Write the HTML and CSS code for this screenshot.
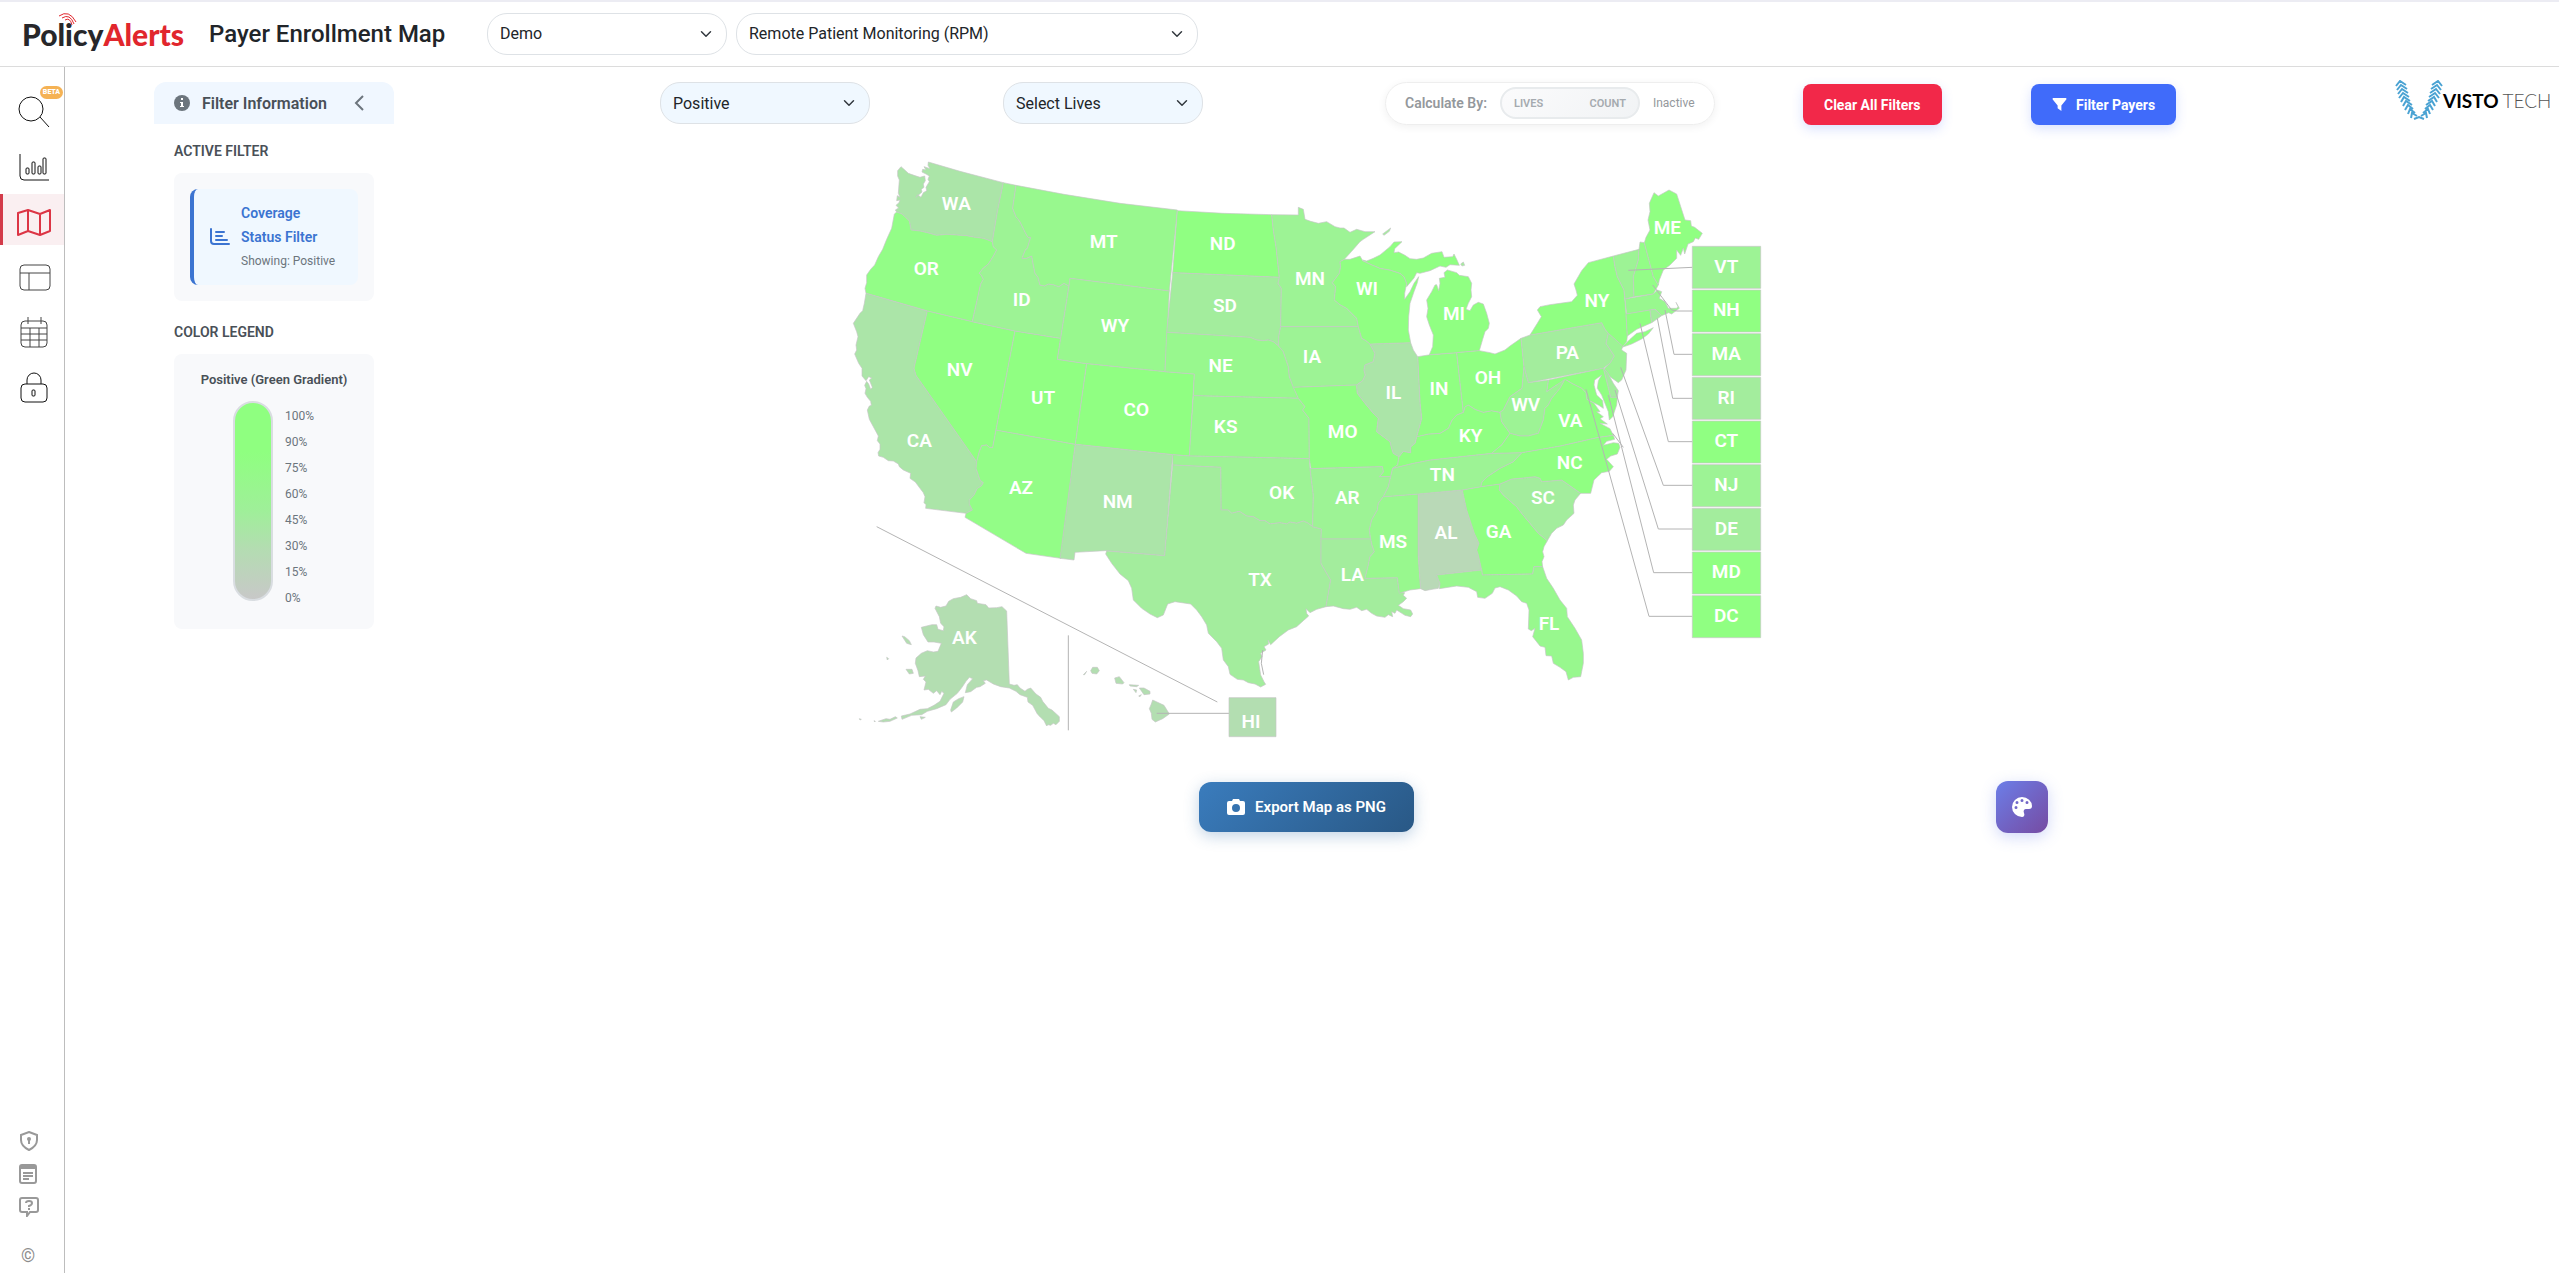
FILE: index.html
```html
<!DOCTYPE html>
<html lang="en">

<head>
    <meta charset="utf-8">
    <title>Payer Enrollment Map</title>
    <link rel="stylesheet" href="styles.css">
</head>

<body>
    <header class="topbar">
        <a class="brand" href="#">
            <svg class="brand-signal" viewBox="0 0 20 14" aria-hidden="true">
                <path d="M1 4Q11 -3 18 10M4 6Q12 1 16 12M7 8Q12 5 14 13" />
            </svg>
            <span>Policy</span><span class="brand-red">Alerts</span>
        </a>
        <h1>Payer Enrollment Map</h1>
        <select class="select select-client" aria-label="Client">
            <option>Demo</option>
        </select>
        <select class="select select-policy" aria-label="Policy">
            <option>Remote Patient Monitoring (RPM)</option>
        </select>
    </header>

    <div class="page">
        <nav class="sidenav">
            <a class="nav-item" href="#" aria-label="Search">
                <svg viewBox="0 0 36 36"><circle cx="15" cy="17" r="12" /><path d="M24 25L33 35" /></svg>
                <span class="beta">BETA</span>
            </a>
            <a class="nav-item" href="#" aria-label="Charts">
                <svg viewBox="0 0 36 36"><path d="M4 7V29Q4 33 8 33H33" /><rect x="10" y="21" width="3" height="6" rx="1" /><rect x="16" y="15" width="3" height="12" rx="1" /><rect x="22" y="19" width="3" height="8" rx="1" /><rect x="27" y="11" width="3" height="16" rx="1" /></svg>
            </a>
            <a class="nav-item active" href="#" aria-label="Map">
                <svg viewBox="0 0 36 36"><path d="M2 11L12 8L24 12L34 8V29L24 33L12 29L2 33ZM12 8V29M24 12V33" /></svg>
            </a>
            <a class="nav-item" href="#" aria-label="Layout">
                <svg viewBox="0 0 36 36" class="grey"><rect x="4" y="8" width="30" height="25" rx="4" /><path d="M4 16H34M13 16V33" /></svg>
            </a>
            <a class="nav-item" href="#" aria-label="Calendar">
                <svg viewBox="0 0 36 36" class="grey"><rect x="5" y="9" width="26" height="26" rx="4" /><path d="M12 5V12M25 5V12M5 16H31M5 22H31M5 28H31M14 16V35M23 16V35" /></svg>
            </a>
            <a class="nav-item" href="#" aria-label="Security">
                <svg viewBox="0 0 36 36"><rect x="5" y="17" width="26" height="18" rx="4" /><path d="M11 17V13A7 7 0 0 1 25 13V17" /><rect x="16" y="23" width="3" height="6" rx="1" /></svg>
            </a>
            <div class="nav-bottom">
                <a href="#" aria-label="Privacy">
                    <svg viewBox="0 0 20 20"><path d="M10 1L18 4V9Q18 15 10 19Q2 15 2 9V4Z" /><circle cx="10" cy="8" r="2" class="solid" /><path d="M10 8V13" /></svg>
                </a>
                <a href="#" aria-label="Terms">
                    <svg viewBox="0 0 20 20"><rect x="1" y="1" width="16" height="18" rx="2" /><path d="M2 3H16" class="thick" /><path d="M4 9H14M4 12H14M4 15H10" /></svg>
                </a>
                <a href="#" aria-label="Help">
                    <svg viewBox="0 0 20 20"><path d="M3 1H17Q19 1 19 3V13Q19 15 17 15H11L8 19V15H3Q1 15 1 13V3Q1 1 3 1Z" /><path d="M7 6Q7 4 10 4Q13 4 13 6Q13 8 10 9V10M10 11V13" /></svg>
                </a>
                <span class="copyright">©</span>
            </div>
        </nav>

        <main>
            <aside class="filter-panel">
                <div class="filter-header">
                    <svg class="info-icon" viewBox="0 0 16 16"><circle cx="8" cy="8" r="8" /><path d="M7 3h2v2H7zM6 7h3v4h1v1H6v-1h1V8H6z" /></svg>
                    <h2>Filter Information</h2>
                    <button class="collapse" aria-label="Collapse">
                        <svg viewBox="0 0 10 16"><path d="M9 1L2 8L9 15" /></svg>
                    </button>
                </div>
                <div class="filter-body">
                    <h3>ACTIVE FILTER</h3>
                    <div class="card">
                        <div class="active-filter">
                            <svg viewBox="0 0 20 18"><path d="M1 1V13Q1 16 4 16H19M6 4H14M6 8H12M6 12H17" /></svg>
                            <div>
                                <strong>Coverage Status Filter</strong>
                                <span>Showing: Positive</span>
                            </div>
                        </div>
                    </div>
                    <h3>COLOR LEGEND</h3>
                    <div class="card legend">
                        <h4>Positive (Green Gradient)</h4>
                        <div class="legend-scale">
                            <div class="legend-bar"></div>
                            <ul>
                                <li>100%</li>
                                <li>90%</li>
                                <li>75%</li>
                                <li>60%</li>
                                <li>45%</li>
                                <li>30%</li>
                                <li>15%</li>
                                <li>0%</li>
                            </ul>
                        </div>
                    </div>
                </div>
            </aside>

            <section class="content">
                <div class="toolbar">
                    <select class="select select-blue select-status" aria-label="Coverage status">
                        <option>Positive</option>
                    </select>
                    <select class="select select-blue select-lives" aria-label="Lives">
                        <option>Select Lives</option>
                    </select>
                    <div class="calculate">
                        <span class="calc-label">Calculate By:</span>
                        <button class="toggle" disabled><span>LIVES</span><span>COUNT</span></button>
                        <span class="calc-state">Inactive</span>
                    </div>
                    <button class="btn btn-red">Clear All Filters</button>
                    <button class="btn btn-blue">
                        <svg viewBox="0 0 16 16"><path d="M1 1H15Q16 2 15 3L10 9V15L6 12V9L1 3Q0 2 1 1Z" /></svg>
                        Filter Payers
                    </button>
                    <a class="visto" href="#">
                        <svg viewBox="0 0 48 42" aria-hidden="true">
                            <g class="visto-mark">
                                <path d="M1 6L5 1L11 5M2 10L6 5L12 9M3 14L7 9L13 13M4 18L8 13L14 17M6 22L9 17L15 21M8 26L11 21L17 25M10 30L13 25L18 29M13 34L15 29L20 33M16 38L17 33L22 36" />
                                <path d="M47 6L43 1L37 5M46 10L42 5L36 9M45 14L41 9L35 13M44 18L40 13L34 17M42 22L39 17L33 21M40 26L37 21L31 25M38 30L35 25L30 29M35 34L33 29L28 33M32 38L31 33L26 36M19 39L24 37L29 39" />
                            </g>
                        </svg>
                        <span class="visto-name">VISTO</span><span class="visto-tech">TECH</span>
                    </a>
                </div>

                <div class="stage">
                    <svg class="map" viewBox="0 0 2766 1770" role="img" aria-label="Enrollment by state">
                        <g class="states">
                            <path class="c40" d="M265 36L360 64L490 98L472 185L457 275L430 265L405 262L380 257L320 253L290 256L262 248L240 243L213 240L208 213L195 200L186 192L170 186L166 180L176 174L168 166L177 158L180 150L170 152L172 137L180 142L175 130L178 90L173 78L173 62L183 50L192 58L205 70L222 76L240 82L254 78L256 92L250 102L252 112L244 118L246 126L228 142L233 134L243 142L250 128L260 122L258 112L268 95L264 88L268 78L258 72L246 66L248 58L258 60L252 50L270 56L264 46Z" />
                            <path class="c85" d="M170 186L186 192L195 200L208 213L213 240L240 243L262 248L290 256L320 253L380 257L405 262L430 265L457 275L460 290L470 300L458 322L445 342L428 356L418 370L424 376L430 388L422 402L397 515L262 483L78 430L75 415L80 398L80 375L92 358L104 345L115 320L128 298L140 268L155 235L163 192Z" />
                            <path class="c40" d="M78 430L262 483L222 655L228 676L410 935L408 955L415 975L420 990L430 998L424 1008L412 1015L402 1035L388 1050L388 1062L397 1080L378 1090L257 1075L258 1064L252 1058L255 1040L250 1028L240 1015L226 996L210 985L212 970L190 960L178 950L175 942L160 933L145 932L130 922L116 918L114 908L120 898L120 882L112 872L115 858L100 830L88 808L82 780L88 768L94 766L92 754L82 742L75 730L78 716L74 706L80 694L86 702L92 718L97 712L88 690L95 684L86 680L78 692L66 678L66 655L56 640L44 612L50 600L48 585L54 560L50 545L40 520L60 490L68 482L73 460Z" />
                            <path class="c90" d="M262 483L397 515L525 543L468 840L458 893L448 892L440 885L425 887L418 905L410 935L228 676L222 655Z" />
                            <path class="c85" d="M468 840L706 883L662 1225L558 1210L375 1102L378 1090L397 1080L388 1062L388 1050L402 1035L412 1015L424 1008L430 998L420 990L415 975L408 955L410 935L418 905L425 887L440 885L448 892L458 893Z" />
                            <path class="c90" d="M525 543L662 565L652 628L740 641L706 883L468 840Z" />
                            <path class="c60" d="M490 98L528 106L518 175L528 200L540 215L556 248L564 262L572 262L562 295L556 300L546 325L560 325L575 318L580 345L585 370L594 382L600 405L614 408L625 402L640 404L656 410L672 400L687 408L662 565L525 543L397 515L422 402L430 388L424 376L418 370L428 356L445 342L458 322L470 300L460 290L457 275L472 185Z" />
                            <path class="c75" d="M528 106L672 133L840 160L1012 180L988 423L690 385L687 408L672 400L656 410L640 404L625 402L614 408L600 405L594 382L585 370L580 345L575 318L560 325L546 325L556 300L562 295L572 262L564 262L556 248L540 215L528 200L518 175Z" />
                            <path class="c75" d="M690 385L988 423L975 665L740 641L652 628L662 565L687 408Z" />
                            <path class="c90" d="M740 641L975 665L1063 672L1048 918L998 914L706 883Z" />
                            <path class="c40" d="M706 883L998 914L974 1217L795 1202L705 1207L702 1230L660 1225Z" />
                            <path class="c90" d="M1012 182L1150 190L1295 194L1300 240L1308 290L1318 382L998 368Z" />
                            <path class="c50" d="M998 368L1318 382L1314 400L1324 415L1322 530L1316 560L1315 587L1300 575L1285 570L1270 572L1250 570L1230 562L980 547Z" />
                            <path class="c75" d="M980 547L1230 562L1250 570L1270 572L1285 570L1300 575L1315 587L1330 605L1335 620L1345 650L1348 680L1360 710L1375 745L1060 737L1063 672L975 665Z" />
                            <path class="c75" d="M1060 737L1375 745L1395 770L1388 780L1407 805L1408 926L1048 918Z" />
                            <path class="c60" d="M998 914L1048 918L1408 926L1410 955L1420 1035L1418 1130L1405 1120L1390 1113L1370 1120L1350 1116L1340 1122L1320 1118L1290 1122L1275 1112L1260 1112L1240 1100L1220 1098L1198 1084L1175 1090L1165 1080L1143 1080L1142 952L998 945Z" />
                            <path class="c50" d="M998 945L1142 952L1143 1080L1165 1080L1175 1090L1198 1084L1220 1098L1240 1100L1260 1112L1275 1112L1290 1122L1320 1118L1340 1122L1350 1116L1370 1120L1390 1113L1405 1120L1418 1130L1444 1137L1443 1240L1460 1270L1472 1290L1465 1330L1458 1370L1430 1378L1410 1388L1398 1376L1400 1390L1406 1398L1390 1412L1370 1430L1345 1440L1318 1460L1292 1484L1284 1470L1286 1482L1272 1490L1278 1500L1262 1510L1266 1520L1256 1535L1262 1575L1272 1595L1277 1603L1262 1611L1245 1602L1225 1598L1210 1590L1192 1588L1170 1573L1165 1550L1150 1530L1145 1495L1130 1475L1105 1450L1100 1425L1085 1400L1070 1380L1052 1362L1005 1355L983 1362L970 1395L952 1403L930 1392L905 1375L880 1350L875 1315L865 1292L840 1272L815 1240L797 1212L800 1203L974 1217Z" />
                            <path class="c60" d="M1295 194L1375 195L1375 172L1390 178L1395 208L1412 214L1435 220L1460 215L1485 230L1500 234L1512 234L1530 247L1550 238L1575 245L1605 245L1570 268L1560 275L1535 304L1513 328L1500 335L1502 350L1498 370L1477 398L1487 410L1485 430L1483 450L1500 464L1520 475L1535 490L1550 505L1555 530L1322 530L1324 415L1314 400L1318 382L1308 290L1300 240Z" />
                            <path class="c60" d="M1322 530L1555 530L1565 565L1578 572L1590 582L1605 610L1600 635L1575 645L1572 660L1576 675L1568 692L1550 705L1360 712L1348 680L1345 650L1335 620L1330 605L1315 587L1316 560Z" />
                            <path class="c90" d="M1360 712L1550 705L1552 730L1575 760L1600 790L1615 805L1610 845L1630 860L1650 875L1655 895L1660 910L1677 920L1673 945L1658 955L1652 980L1618 980L1630 966L1627 950L1413 956L1408 926L1407 805L1388 780L1395 770L1375 745Z" />
                            <path class="c60" d="M1413 956L1627 950L1630 966L1618 980L1652 980L1645 1010L1630 1040L1615 1060L1612 1080L1595 1110L1588 1140L1592 1167L1443 1167L1444 1137L1418 1130L1420 1035L1410 955Z" />
                            <path class="c50" d="M1443 1167L1592 1167L1596 1185L1603 1205L1590 1220L1585 1245L1575 1285L1672 1283L1678 1325L1694 1328L1690 1336L1700 1345L1690 1355L1675 1366L1690 1376L1712 1380L1718 1392L1712 1400L1695 1396L1670 1380L1665 1390L1655 1385L1658 1400L1645 1394L1635 1402L1610 1398L1595 1390L1580 1378L1565 1382L1550 1372L1530 1378L1510 1376L1480 1368L1458 1370L1465 1330L1472 1290L1460 1270L1443 1240Z" />
                            <path class="c75" d="M1630 1040L1735 1032L1735 1220L1742 1316L1710 1320L1678 1330L1672 1283L1575 1285L1585 1245L1590 1220L1603 1205L1596 1185L1592 1167L1588 1140L1595 1110L1612 1080L1615 1060Z" />
                            <path class="c20" d="M1735 1032L1867 1020L1880 1080L1903 1150L1917 1180L1910 1200L1915 1215L1925 1260L1790 1275L1800 1300L1795 1315L1776 1318L1755 1322L1742 1316L1735 1220Z" />
                            <path class="c90" d="M1867 1020L1922 1010L1980 1002L1978 1020L1990 1035L2030 1070L2045 1090L2070 1120L2095 1150L2122 1172L2112 1190L2108 1205L2112 1220L2106 1235L2108 1250L2082 1250L2078 1272L1927 1275L1925 1260L1915 1215L1910 1200L1917 1180L1903 1150L1880 1080Z" />
                            <path class="c75" d="M1790 1275L1925 1260L1927 1275L2078 1272L2082 1250L2108 1250L2120 1285L2140 1315L2160 1350L2180 1375L2182 1400L2205 1435L2225 1470L2230 1510L2230 1540L2222 1580L2200 1582L2185 1590L2178 1565L2160 1552L2140 1540L2135 1518L2118 1517L2115 1492L2100 1488L2078 1460L2085 1435L2074 1442L2065 1437L2067 1380L2060 1360L2045 1355L2030 1338L2005 1320L1980 1310L1965 1314L1957 1330L1935 1345L1913 1342L1910 1325L1885 1312L1850 1308L1798 1316L1800 1300Z" />
                            <path class="c50" d="M1980 1002L2015 987L2050 984L2085 980L2100 985L2105 995L2165 990L2222 1030L2205 1050L2200 1065L2202 1090L2180 1110L2170 1125L2150 1135L2135 1150L2122 1172L2095 1150L2070 1120L2045 1090L2030 1070L1990 1035L1978 1020Z" />
                            <path class="c90" d="M2045 908L2160 888L2275 862L2320 856L2324 868L2300 874L2290 886L2320 878L2336 880L2340 892L2332 912L2312 918L2300 928L2320 950L2308 964L2285 968L2262 990L2252 1030L2222 1030L2165 990L2105 995L2100 985L2085 980L2050 984L2015 987L1980 1002L1922 1010L1926 995L1945 978L1980 955L2020 935Z" />
                            <path class="c60" d="M1658 955L1720 940L1770 930L1955 910L2045 908L2020 935L1980 955L1945 978L1926 995L1922 1010L1867 1020L1735 1032L1630 1040L1645 1010L1652 980Z" />
                            <path class="c90" d="M1658 955L1673 945L1677 920L1690 904L1712 908L1712 890L1725 880L1730 860L1765 852L1800 850L1825 835L1835 812L1850 795L1870 787L1875 770L1885 765L1905 778L1930 787L1955 782L1980 787L1985 815L2010 850L1985 885L1955 910L1770 930L1720 940Z" />
                            <path class="c90" d="M1733 620L1765 615L1850 608L1870 787L1850 795L1835 812L1825 835L1800 850L1765 852L1730 860L1745 805L1740 760Z" />
                            <path class="c40" d="M1590 582L1712 578L1720 600L1733 620L1740 760L1745 805L1730 860L1725 880L1712 890L1712 908L1690 904L1677 920L1660 910L1655 895L1650 875L1630 860L1610 845L1615 805L1600 790L1575 760L1552 730L1550 705L1568 692L1576 675L1572 660L1575 645L1600 635L1605 610Z" />
                            <path class="c90" d="M1513 328L1530 328L1560 318L1568 332L1585 340L1620 355L1650 360L1680 370L1692 380L1700 400L1694 430L1694 448L1710 425L1722 400L1736 380L1732 398L1722 425L1710 460L1706 500L1705 540L1712 578L1590 582L1578 572L1565 565L1555 530L1550 505L1535 490L1520 475L1500 464L1483 450L1485 430L1487 410L1477 398L1498 370L1502 350L1500 335Z" />
                            <path class="c90" d="M1568 330L1580 333L1600 325L1620 315L1650 290L1662 276L1686 275L1664 296L1662 308L1676 306L1695 316L1710 326L1730 328L1750 324L1775 310L1806 305L1812 322L1838 320L1842 312L1850 328L1858 346L1830 344L1818 352L1800 348L1770 362L1740 370L1730 368L1722 384L1700 410L1700 400L1692 380L1680 370L1650 360L1620 355L1585 340Z" />
                            <path class="c90" d="M1768 614L1778 590L1780 555L1768 525L1760 500L1764 475L1760 450L1775 425L1785 405L1790 404L1796 422L1800 400L1798 385L1815 382L1812 368L1822 360L1850 368L1858 376L1885 380L1895 400L1893 420L1895 440L1885 460L1878 478L1890 482L1900 465L1915 457L1930 462L1940 490L1948 520L1945 535L1935 545L1928 568L1918 602L1850 608Z" />
                            <path class="c50" d="M1628 252L1652 234L1648 244L1632 256ZM1862 342L1870 336L1874 346L1866 348Z" />
                            <path class="c90" d="M1850 608L1918 602L1950 608L1965 612L1995 600L2010 588L2043 565L2052 650L2046 715L2010 740L1990 780L1980 787L1955 782L1930 787L1905 778L1885 765L1875 770L1870 787Z" />
                            <path class="c50" d="M2043 565L2070 555L2285 518L2295 538L2305 550L2298 580L2323 618L2310 640L2290 655L2065 698L2052 650Z" />
                            <path class="c90" d="M2070 555L2092 520L2104 500L2092 480L2100 470L2130 464L2160 460L2195 455L2212 436L2208 420L2202 402L2225 362L2245 338L2320 318L2325 350L2332 380L2352 420L2358 492L2362 558L2360 575L2348 590L2305 550L2295 538L2285 518Z" />
                            <path class="c90" d="M2346 592L2370 568L2390 550L2415 545L2440 533L2425 552L2405 567L2375 582Z" />
                            <path class="c60" d="M2305 550L2348 588L2345 600L2360 610L2358 660L2345 690L2335 698L2310 680L2292 656L2310 640L2323 618L2298 580Z" />
                            <path class="c60" d="M2320 318L2397 298L2395 330L2380 380L2382 440L2355 447L2352 420L2332 380L2325 350Z" />
                            <path class="c85" d="M2397 298L2400 276L2413 278L2440 380L2455 405L2440 432L2382 440L2380 380L2395 330Z" />
                            <path class="c90" d="M2413 278L2418 262L2430 240L2424 210L2430 185L2428 160L2442 128L2455 138L2487 120L2510 132L2535 210L2552 212L2554 228L2564 232L2587 250L2576 268L2566 264L2560 275L2544 282L2534 312L2530 294L2522 316L2510 300L2510 325L2490 345L2470 360L2458 390L2455 405L2440 380Z" />
                            <path class="c75" d="M2355 447L2440 432L2452 420L2465 425L2458 445L2475 455L2485 475L2510 475L2514 470L2508 457L2518 475L2495 492L2486 488L2465 497L2445 478L2360 492Z" />
                            <path class="c90" d="M2358 492L2430 480L2435 518L2390 538L2362 558Z" />
                            <path class="c50" d="M2430 480L2445 478L2465 497L2450 508L2435 518Z" />
                            <path class="c50" d="M2290 655L2303 668L2320 700L2335 722L2332 742L2312 742Z" />
                            <path class="c90" d="M2120 725L2125 690L2290 655L2312 742L2332 742L2330 765L2318 800L2308 810L2305 785L2285 735L2272 715L2275 692L2285 675L2264 690L2262 705L2270 735L2288 752L2290 775L2275 765L2240 748L2238 728L2225 715L2195 700L2180 690L2150 705Z" />
                            <path class="c60" d="M2052 650L2065 698L2125 690L2120 725L2150 705L2175 688L2160 715L2135 745L2125 765L2115 775L2110 810L2095 850L2065 858L2040 858L2010 850L1985 815L1980 787L1990 780L2010 740L2046 715Z" />
                            <path class="c90" d="M2175 688L2195 700L2225 715L2238 728L2240 748L2262 760L2280 785L2270 785L2290 800L2280 806L2302 822L2280 820L2310 836L2320 856L2275 862L2160 888L2045 908L1955 910L1985 885L2010 850L2040 858L2065 858L2095 850L2110 810L2115 775L2125 765L2135 745L2160 715Z" />
                            <path class="c30" d="M285 1375L288 1368L302 1372L318 1368L326 1354L340 1346L362 1342L380 1334L392 1346L410 1352L412 1360L438 1364L446 1374L470 1373L486 1370L500 1383L508 1602L522 1606L532 1604L540 1614L555 1624L562 1618L572 1614L588 1632L602 1642L608 1654L625 1675L636 1680L658 1700L658 1714L648 1724L640 1720L632 1726L624 1724L620 1728L612 1712L600 1700L592 1692L578 1666L564 1656L562 1642L540 1634L528 1624L508 1614L482 1610L460 1602L440 1590L430 1592L436 1600L420 1610L410 1612L392 1625L376 1628L382 1604L398 1586L388 1582L378 1594L366 1612L352 1630L330 1648L318 1664L290 1676L262 1684L245 1694L215 1696L186 1708L184 1698L210 1692L240 1678L262 1676L282 1666L300 1654L312 1630L305 1624L300 1634L290 1622L280 1630L265 1618L252 1620L258 1596L250 1588L256 1578L238 1580L234 1562L226 1540L228 1524L244 1510L262 1502L280 1506L294 1504L304 1480L282 1476L264 1476L250 1454L244 1432L276 1424L290 1424L294 1438L310 1442L312 1430L302 1420L298 1400Z" />
                            <path class="c30" d="M332 1680L340 1656L356 1646L372 1640L368 1656L350 1674L334 1686ZM186 1458L194 1460L208 1472L214 1484L200 1480ZM198 1558L216 1558L220 1570L208 1572ZM140 1522L146 1526L142 1530ZM115 1714L138 1706L150 1708L166 1700L172 1704L150 1714L130 1716ZM58 1706L64 1708L60 1710ZM102 1712L106 1714L104 1716ZM240 1700L256 1702L244 1708Z" />
                            <path class="c30" d="M752 1562L758 1552L772 1552L778 1562L770 1572L756 1570ZM730 1574L740 1564L734 1574ZM824 1584L838 1580L852 1598L848 1602L828 1600ZM868 1604L896 1606L890 1610L870 1608ZM880 1618L890 1620L888 1628ZM898 1614L912 1614L930 1624L930 1632L912 1634ZM896 1638L904 1634L900 1640ZM934 1662L938 1650L972 1666L988 1692L968 1706L946 1716L936 1708L934 1690L928 1676Z" />
                        </g>

                        <g class="leaders">
                            <path d="M110 1130L1132 1656M685 1456V1741M950 1690H1167" />
                            <path d="M2365 361L2557 352M2438 405L2495 480L2510 483H2557M2475 480L2502 613H2557M2452 505L2498 745H2557M2400 520L2485 875H2557M2342 652L2470 1006H2557M2325 720L2455 1137H2557M2305 735L2441 1268H2557M2238 718L2427 1399H2557" />
                            <path d="M2318 850L2350 892M1268 1500L1264 1540L1271 1574" />
                        </g>

                        <g class="states">
                            <rect class="c60" x="2557" y="289" width="205" height="126" />
                            <rect class="c90" x="2557" y="420" width="205" height="126" />
                            <rect class="c75" x="2557" y="551" width="205" height="126" />
                            <rect class="c50" x="2557" y="682" width="205" height="126" />
                            <rect class="c90" x="2557" y="813" width="205" height="126" />
                            <rect class="c60" x="2557" y="944" width="205" height="126" />
                            <rect class="c50" x="2557" y="1075" width="205" height="126" />
                            <rect class="c90" x="2557" y="1206" width="205" height="126" />
                            <rect class="c90" x="2557" y="1337" width="205" height="126" />
                            <rect class="c30" x="1167" y="1643" width="141" height="117" />
                        </g>

                        <g class="labels">
                            <text x="349" y="180">WA</text>
                            <text x="259" y="375">OR</text>
                            <text x="238" y="891">CA</text>
                            <text x="359" y="677">NV</text>
                            <text x="545" y="467">ID</text>
                            <text x="791" y="293">MT</text>
                            <text x="825" y="545">WY</text>
                            <text x="609" y="762">UT</text>
                            <text x="889" y="797">CO</text>
                            <text x="543" y="1032">AZ</text>
                            <text x="833" y="1073">NM</text>
                            <text x="1148" y="299">ND</text>
                            <text x="1155" y="485">SD</text>
                            <text x="1142" y="666">NE</text>
                            <text x="1157" y="848">KS</text>
                            <text x="1325" y="1046">OK</text>
                            <text x="1260" y="1309">TX</text>
                            <text x="1410" y="404">MN</text>
                            <text x="1416" y="639">IA</text>
                            <text x="1508" y="863">MO</text>
                            <text x="1522" y="1062">AR</text>
                            <text x="1537" y="1292">LA</text>
                            <text x="1581" y="435">WI</text>
                            <text x="1842" y="509">MI</text>
                            <text x="1660" y="746">IL</text>
                            <text x="1797" y="734">IN</text>
                            <text x="1944" y="703">OH</text>
                            <text x="1892" y="875">KY</text>
                            <text x="1807" y="992">TN</text>
                            <text x="1659" y="1193">MS</text>
                            <text x="1818" y="1166">AL</text>
                            <text x="1976" y="1163">GA</text>
                            <text x="2127" y="1440">FL</text>
                            <text x="2109" y="1061">SC</text>
                            <text x="2189" y="956">NC</text>
                            <text x="2191" y="831">VA</text>
                            <text x="2057" y="782">WV</text>
                            <text x="2182" y="626">PA</text>
                            <text x="2271" y="470">NY</text>
                            <text x="2482" y="251">ME</text>
                            <text x="373" y="1481">AK</text>
                            <text x="1233" y="1733">HI</text>
                            <text x="2659" y="368">VT</text>
                            <text x="2659" y="499">NH</text>
                            <text x="2659" y="630">MA</text>
                            <text x="2659" y="761">RI</text>
                            <text x="2659" y="892">CT</text>
                            <text x="2659" y="1023">NJ</text>
                            <text x="2659" y="1154">DE</text>
                            <text x="2659" y="1285">MD</text>
                            <text x="2659" y="1416">DC</text>
                        </g>
                    </svg>

                    <div class="actions">
                        <button class="export">
                            <svg viewBox="0 0 18 16"><path fill-rule="evenodd" d="M6 0H12L13 2H16Q18 2 18 4V14Q18 16 16 16H2Q0 16 0 14V4Q0 2 2 2H5ZM9 5A4 4 0 1 0 9 13A4 4 0 1 0 9 5Z" /></svg>
                            Export Map as PNG
                        </button>
                        <button class="palette" aria-label="Color theme">
                            <svg viewBox="0 0 20 20"><path fill-rule="evenodd" d="M10 0A10 10 0 0 0 0 10A10 10 0 0 0 10 20C12 20 13 18 12 16C11 14 12 12 14 12H17C19 12 20 11 20 9A10 9 0 0 0 10 0ZM4 9A1 1 0 0 1 4 12A1 1 0 0 1 4 9ZM5 4A1 1 0 0 1 5 7A1 1 0 0 1 5 4ZM10 2A1 1 0 0 1 10 5A1 1 0 0 1 10 2ZM15 4A1 1 0 0 1 15 7A1 1 0 0 1 15 4Z" /></svg>
                        </button>
                    </div>
                </div>
            </section>
        </main>
    </div>
</body>

</html>
```

FILE: styles.css
```css
* {
    box-sizing: border-box;
}

body {
    font-family: Roboto, "Liberation Sans", sans-serif;
    font-size: 16px;
    color: #212529;
    background-color: #fff;
    margin: 0;
    min-height: 100vh;
    display: flex;
    flex-direction: column;
}

h1, h2, h3, h4, ul {
    margin: 0;
    padding: 0;
}

button {
    font-family: inherit;
    border: none;
    cursor: pointer;
}

a {
    color: inherit;
    text-decoration: none;
}

/* Top bar */
.topbar {
    display: flex;
    align-items: center;
    height: 67px;
    padding: 1px 0 0 22px;
    border-bottom: 1px solid #dcdcdc;
    box-shadow: inset 0 2px 0 #ececf3;
}

.brand {
    position: relative;
    display: flex;
    width: 187px;
    font-family: Lato, sans-serif;
    font-size: 30px;
    font-weight: 900;
    line-height: 36px;
    color: #27272a;
}

.brand-red {
    color: #e1262d;
}

.brand-signal {
    position: absolute;
    left: 36px;
    top: -4px;
    width: 20px;
    height: 14px;
    fill: none;
    stroke: #e1262d;
    stroke-width: 1;
}

.topbar h1 {
    width: 278px;
    font-size: 24px;
    font-weight: 500;
}

.select {
    appearance: none;
    height: 42px;
    padding: 0 40px 0 12px;
    border: 1px solid #dee2e6;
    border-radius: 20px;
    font-family: inherit;
    font-size: 16px;
    color: #212529;
    background: #fff url("data:image/svg+xml,%3Csvg xmlns='http://www.w3.org/2000/svg' viewBox='0 0 16 16'%3E%3Cpath fill='none' stroke='%23343a40' stroke-width='2' stroke-linecap='round' stroke-linejoin='round' d='m2 5 6 6 6-6'/%3E%3C/svg%3E") no-repeat right 14px center / 12px 12px;
}

.select-client {
    width: 240px;
    margin-right: 9px;
}

.select-policy {
    width: 462px;
}

.select-blue {
    background-color: #f0f8ff;
}

.select-status {
    width: 210px;
}

.select-lives {
    width: 200px;
}

.page {
    display: flex;
    flex: 1;
}

/* Left navigation */
.sidenav {
    display: flex;
    flex-direction: column;
    gap: 4px;
    width: 65px;
    padding: 17px 0 7px;
    border-right: 1px solid #bdbdbd;
}

.nav-item {
    position: relative;
    display: flex;
    align-items: center;
    height: 51px;
    padding-left: 13px;
    border-left: 3px solid transparent;
}

.nav-item svg {
    width: 36px;
    height: 36px;
    fill: none;
    stroke: #111;
    stroke-width: 1;
}

.nav-item svg.grey {
    stroke: #444;
}

.nav-item.active {
    background-color: #faeff1;
    border-left-color: #d33b4a;
}

.nav-item.active svg {
    stroke: #dc3545;
    stroke-width: 2;
    stroke-linejoin: round;
}

.beta {
    position: absolute;
    top: 2px;
    right: 1px;
    width: 23px;
    border-radius: 7px;
    background-color: #f5b254;
    color: #fff;
    font-size: 7px;
    font-weight: 900;
    line-height: 13px;
    text-align: center;
}

.nav-bottom {
    display: flex;
    flex-direction: column;
    gap: 13px;
    margin-top: auto;
    padding-left: 19px;
    color: #8c8c8c;
}

.nav-bottom a {
    height: 20px;
}

.nav-bottom svg {
    width: 20px;
    height: 20px;
    fill: none;
    stroke: #999;
    stroke-width: 2;
}

.nav-bottom .thick {
    stroke-width: 4;
}

.nav-bottom .solid {
    fill: #999;
    stroke: none;
}

.copyright {
    margin-top: 16px;
    padding-left: 2px;
    font-size: 18px;
    line-height: 20px;
}

main {
    display: flex;
    flex: 1;
    padding-left: 89px;
}

/* Filter information */
.filter-panel {
    width: 240px;
    padding-top: 15px;
    color: #495057;
}

.filter-header {
    display: flex;
    align-items: center;
    height: 42px;
    padding: 0 30px 0 20px;
    border-radius: 12px 12px 0 0;
    background-color: #f0f7ff;
}

.filter-header h2 {
    flex: 1;
    margin-left: 12px;
    font-size: 16px;
    font-weight: 600;
}

.info-icon {
    width: 16px;
    height: 16px;
    fill: #6c757d;
}

.info-icon path {
    fill: #fff;
}

.collapse {
    padding: 0;
    background: none;
}

.collapse svg {
    display: block;
    width: 10px;
    height: 16px;
    fill: none;
    stroke: #6c757d;
    stroke-width: 2;
}

.filter-body {
    padding: 16px 20px;
}

.filter-body h3 {
    font-size: 14px;
    font-weight: 600;
    line-height: 22px;
}

.card {
    margin: 11px 0 20px;
    padding: 16px;
    border-radius: 8px;
    background-color: #f8f9fb;
}

.active-filter {
    display: flex;
    align-items: center;
    gap: 11px;
    padding: 12px 16px;
    border-left: 4px solid #3b74d1;
    border-radius: 8px;
    background-color: #f0f8ff;
}

.active-filter svg {
    flex: none;
    width: 20px;
    height: 18px;
    fill: none;
    stroke: #3b74d1;
    stroke-width: 2;
    stroke-linecap: round;
}

.active-filter strong {
    display: block;
    font-size: 14px;
    font-weight: 600;
    line-height: 24px;
    color: #3b74d1;
}

.active-filter span {
    font-size: 12px;
    line-height: 24px;
    white-space: nowrap;
    color: #6c757d;
}

.legend {
    padding-bottom: 18px;
}

.legend h4 {
    font-size: 13px;
    font-weight: 600;
    line-height: 20px;
    text-align: center;
}

.legend-scale {
    display: flex;
    gap: 12px;
    margin-top: 11px;
    padding-left: 43px;
}

.legend-bar {
    width: 40px;
    height: 200px;
    border: 2px solid #d9dde1;
    border-radius: 20px;
    background: linear-gradient(#8fff80 0%, #8fff80 25%, #9fef99 55%, #b4dcb2 75%, #c8c8c8 100%);
}

.legend ul {
    padding-top: 2px;
    list-style: none;
    font-size: 12px;
    line-height: 26px;
    color: #6c757d;
}

/* Toolbar */
.content {
    flex: 1;
    padding-top: 10px;
}

.toolbar {
    display: grid;
    grid-template-columns: 343fr 382fr 418fr 228fr 364fr 155px;
    justify-items: start;
    align-items: center;
    height: 52px;
    padding: 0 9px 0 266px;
}

.calculate {
    display: flex;
    align-items: center;
    gap: 13px;
    height: 43px;
    padding: 0 19px;
    border: 1px solid #eee;
    border-radius: 22px;
    box-shadow: 0 2px 8px rgba(0, 0, 0, 0.06);
    white-space: nowrap;
    color: #94989c;
}

.calc-label {
    font-size: 14px;
    font-weight: 600;
}

.calc-state {
    font-size: 12px;
}

.toggle {
    display: flex;
    justify-content: space-between;
    align-items: center;
    width: 140px;
    height: 32px;
    padding: 0 12px;
    border: 2px solid #e8ebed;
    border-radius: 16px;
    background: linear-gradient(135deg, #fbfbfc, #f1f3f5);
    font-size: 11px;
    font-weight: 600;
    color: #a5aaaf;
}

.btn {
    display: flex;
    align-items: center;
    gap: 9px;
    height: 41px;
    margin-top: 3px;
    padding: 0 21px;
    border-radius: 8px;
    box-shadow: 0 4px 12px rgba(65, 105, 250, 0.2);
    color: #fff;
    font-size: 14px;
    font-weight: 700;
    white-space: nowrap;
}

.btn svg {
    width: 15px;
    height: 15px;
    fill: #fff;
}

.btn-red {
    background-color: #f22849;
}

.btn-blue {
    background-color: #406bfa;
}

.visto {
    display: flex;
    align-self: start;
    align-items: center;
    font-family: Lato, sans-serif;
    font-size: 19px;
    line-height: 48px;
}

.visto svg {
    width: 48px;
    height: 42px;
}

.visto-mark {
    fill: none;
    stroke: #4ba3d3;
    stroke-width: 2;
}

.visto-name {
    font-weight: 700;
    color: #000;
}

.visto-tech {
    margin-left: 4px;
    font-weight: 300;
    color: #555;
}

/* Map */
.stage {
    display: flex;
    flex-direction: column;
    margin: 21px 340px 0 0;
    padding: 0 171px;
}

.map {
    align-self: center;
    width: 922px;
    max-width: 100%;
    margin-right: 12px;
}

.states path,
.states rect {
    stroke: #c6c6c6;
    stroke-width: 2;
    stroke-linejoin: round;
}

.leaders path {
    fill: none;
    stroke: #b4b4b4;
    stroke-width: 3;
}

.labels text {
    fill: #fff;
    font-size: 57px;
    font-weight: 600;
    text-anchor: middle;
}

.c90 { fill: #90ff82; }
.c85 { fill: #93fd87; }
.c75 { fill: #98f88e; }
.c60 { fill: #9df395; }
.c50 { fill: #a3ed9d; }
.c40 { fill: #abe5a8; }
.c30 { fill: #b3deb1; }
.c20 { fill: #b9d9b7; }

.actions {
    display: grid;
    grid-template-columns: 1fr auto 1fr;
    align-items: center;
    margin-top: 41px;
}

.export {
    display: flex;
    grid-column: 2;
    align-items: center;
    gap: 10px;
    height: 50px;
    padding: 0 28px;
    border-radius: 12px;
    background: linear-gradient(135deg, #3a7cbd, #295885);
    box-shadow: 0 4px 15px rgba(50, 110, 170, 0.3);
    color: #fff;
    font-size: 15px;
    font-weight: 600;
}

.export svg {
    width: 18px;
    height: 16px;
    fill: #fff;
}

.palette {
    display: flex;
    align-items: center;
    justify-content: center;
    justify-self: end;
    width: 52px;
    height: 52px;
    border-radius: 12px;
    background: linear-gradient(135deg, #6c7ee8, #764ba2);
    box-shadow: 0 4px 15px rgba(102, 126, 234, 0.3);
}

.palette svg {
    width: 20px;
    height: 20px;
    fill: #fff;
}
```
